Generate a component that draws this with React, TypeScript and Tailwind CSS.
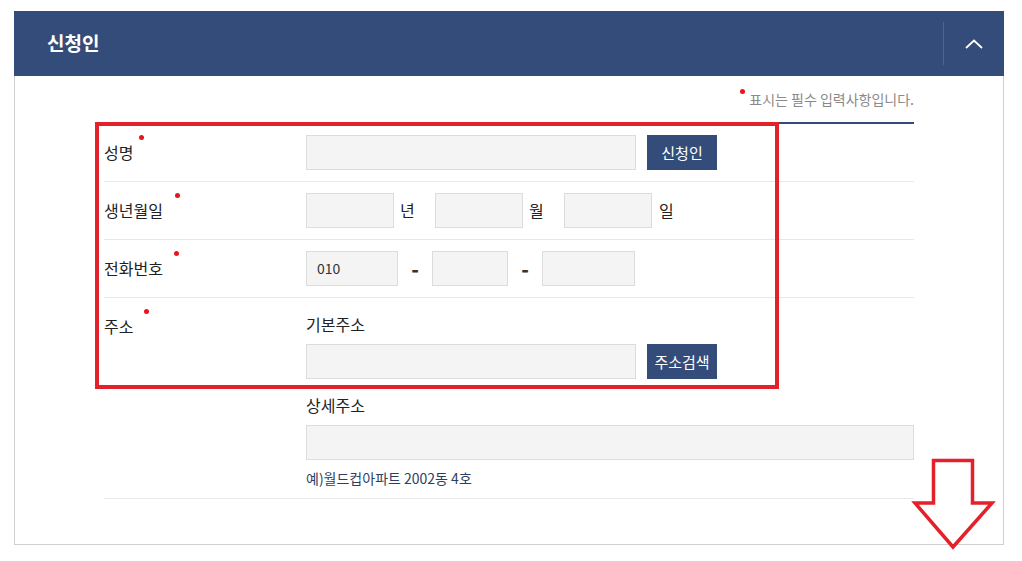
import React from "react";

const FONT = { fontFamily: '"Noto Sans CJK KR", "Noto Sans", sans-serif' };

function Dot({ className = "" }: { className?: string }) {
  return <span className={`inline-block w-[5px] h-[5px] rounded-full bg-[#e8141c] ${className}`} />;
}

function Field({ className = "", value = "" }: { className?: string; value?: string }) {
  return (
    <div
      className={`h-[35px] bg-[#f4f4f4] border border-[#dcdcdc] flex items-center pl-[10px] text-[14px] text-[#333] ${className}`}
    >
      {value}
    </div>
  );
}

function NavyButton({ children }: { children: React.ReactNode }) {
  return (
    <button className="h-[35px] w-[70px] ml-[11px] bg-[#344c79] text-white text-[15px] leading-[35px]">
      {children}
    </button>
  );
}

function Label({ text, dotLeft }: { text: string; dotLeft: string }) {
  return (
    <div className="w-[202px] shrink-0 relative text-[16px] leading-[35px] text-[#222]">
      {text}
      <Dot className={`absolute top-[0px] ${dotLeft}`} />
    </div>
  );
}

export default function App() {
  return (
    <div style={FONT} className="w-[1022px] h-[561px] bg-white pt-[11px] relative overflow-hidden">
      <div className="ml-[14px] w-[990px]">
        {/* header */}
        <div className="h-[65px] bg-[#344c79] flex items-center">
          <h2 className="pl-[33px] text-white text-[19px] font-bold flex-1">신청인</h2>
          <div className="w-px h-[43px] bg-[#4d6390]" />
          <div className="w-[60px] flex justify-center">
            <svg width="18" height="10" viewBox="0 0 18 10" fill="none">
              <path d="M1 9 L9 1.5 L17 9" stroke="white" strokeWidth="1.8" />
            </svg>
          </div>
        </div>

        {/* body */}
        <div className="border border-t-0 border-[#cfcfcf] px-[89px] pb-[45px]">
          <div className="flex justify-end items-start pt-[12px] pb-[12px] text-[14px] leading-[22px] text-[#8a8a8a]">
            <Dot className="mt-[1px] mr-[4px]" />
            표시는 필수 입력사항입니다.
          </div>

          <div className="border-t-2 border-[#344c79]">
            {/* 성명 */}
            <div className="flex h-[58px] pt-[11px] border-b border-[#e8e8e8]">
              <Label text="성명" dotLeft="left-[35px]" />
              <Field className="w-[330px]" />
              <NavyButton>신청인</NavyButton>
            </div>

            {/* 생년월일 */}
            <div className="flex h-[58px] pt-[11px] border-b border-[#e8e8e8]">
              <Label text="생년월일" dotLeft="left-[71px]" />
              <Field className="w-[88px]" />
              <span className="ml-[6px] mr-[21px] w-[14px] text-[16px] leading-[35px] text-[#222]">년</span>
              <Field className="w-[88px]" />
              <span className="ml-[6px] mr-[21px] w-[14px] text-[16px] leading-[35px] text-[#222]">월</span>
              <Field className="w-[88px]" />
              <span className="ml-[7px] w-[14px] text-[16px] leading-[35px] text-[#222]">일</span>
            </div>

            {/* 전화번호 */}
            <div className="flex h-[58px] pt-[11px] border-b border-[#e8e8e8]">
              <Label text="전화번호" dotLeft="left-[70px]" />
              <Field className="w-[92px]" value="010" />
              <span className="w-[34px] text-center text-[20px] font-extrabold leading-[35px] text-[#333]">-</span>
              <Field className="w-[76px]" />
              <span className="w-[34px] text-center text-[20px] font-extrabold leading-[35px] text-[#333]">-</span>
              <Field className="w-[93px]" />
            </div>

            {/* 주소 */}
            <div className="flex pt-[11px] pb-[10px] border-b border-[#e8e8e8]">
              <Label text="주소" dotLeft="left-[40px]" />
              <div className="flex-1">
                <div className="text-[16px] leading-[30px] text-[#222] mb-[5px]">기본주소</div>
                <div className="flex">
                  <Field className="w-[330px]" />
                  <NavyButton>주소검색</NavyButton>
                </div>
                <div className="text-[16px] leading-[30px] text-[#222] mt-[11px] mb-[5px]">상세주소</div>
                <Field className="w-full" />
                <div className="mt-[8px] text-[14px] leading-[20px] text-[#2f3e5f]">
                  예)월드컵아파트 2002동 4호
                </div>
              </div>
            </div>
          </div>
        </div>
      </div>

      {/* annotation: red box */}
      <div className="absolute left-[95px] top-[122px] w-[684px] h-[267px] border-[4px] border-[#e3212a] pointer-events-none" />

      {/* annotation: down arrow */}
      <svg className="absolute left-[910px] top-[455px]" width="90" height="100" viewBox="0 0 90 100" fill="none">
        <path
          d="M23.5 5.5 H62.5 V48 H82 L43 92 L5 48 H23.5 Z"
          stroke="#e3212a"
          strokeWidth="3.5"
          strokeLinejoin="miter"
        />
      </svg>
    </div>
  );
}
